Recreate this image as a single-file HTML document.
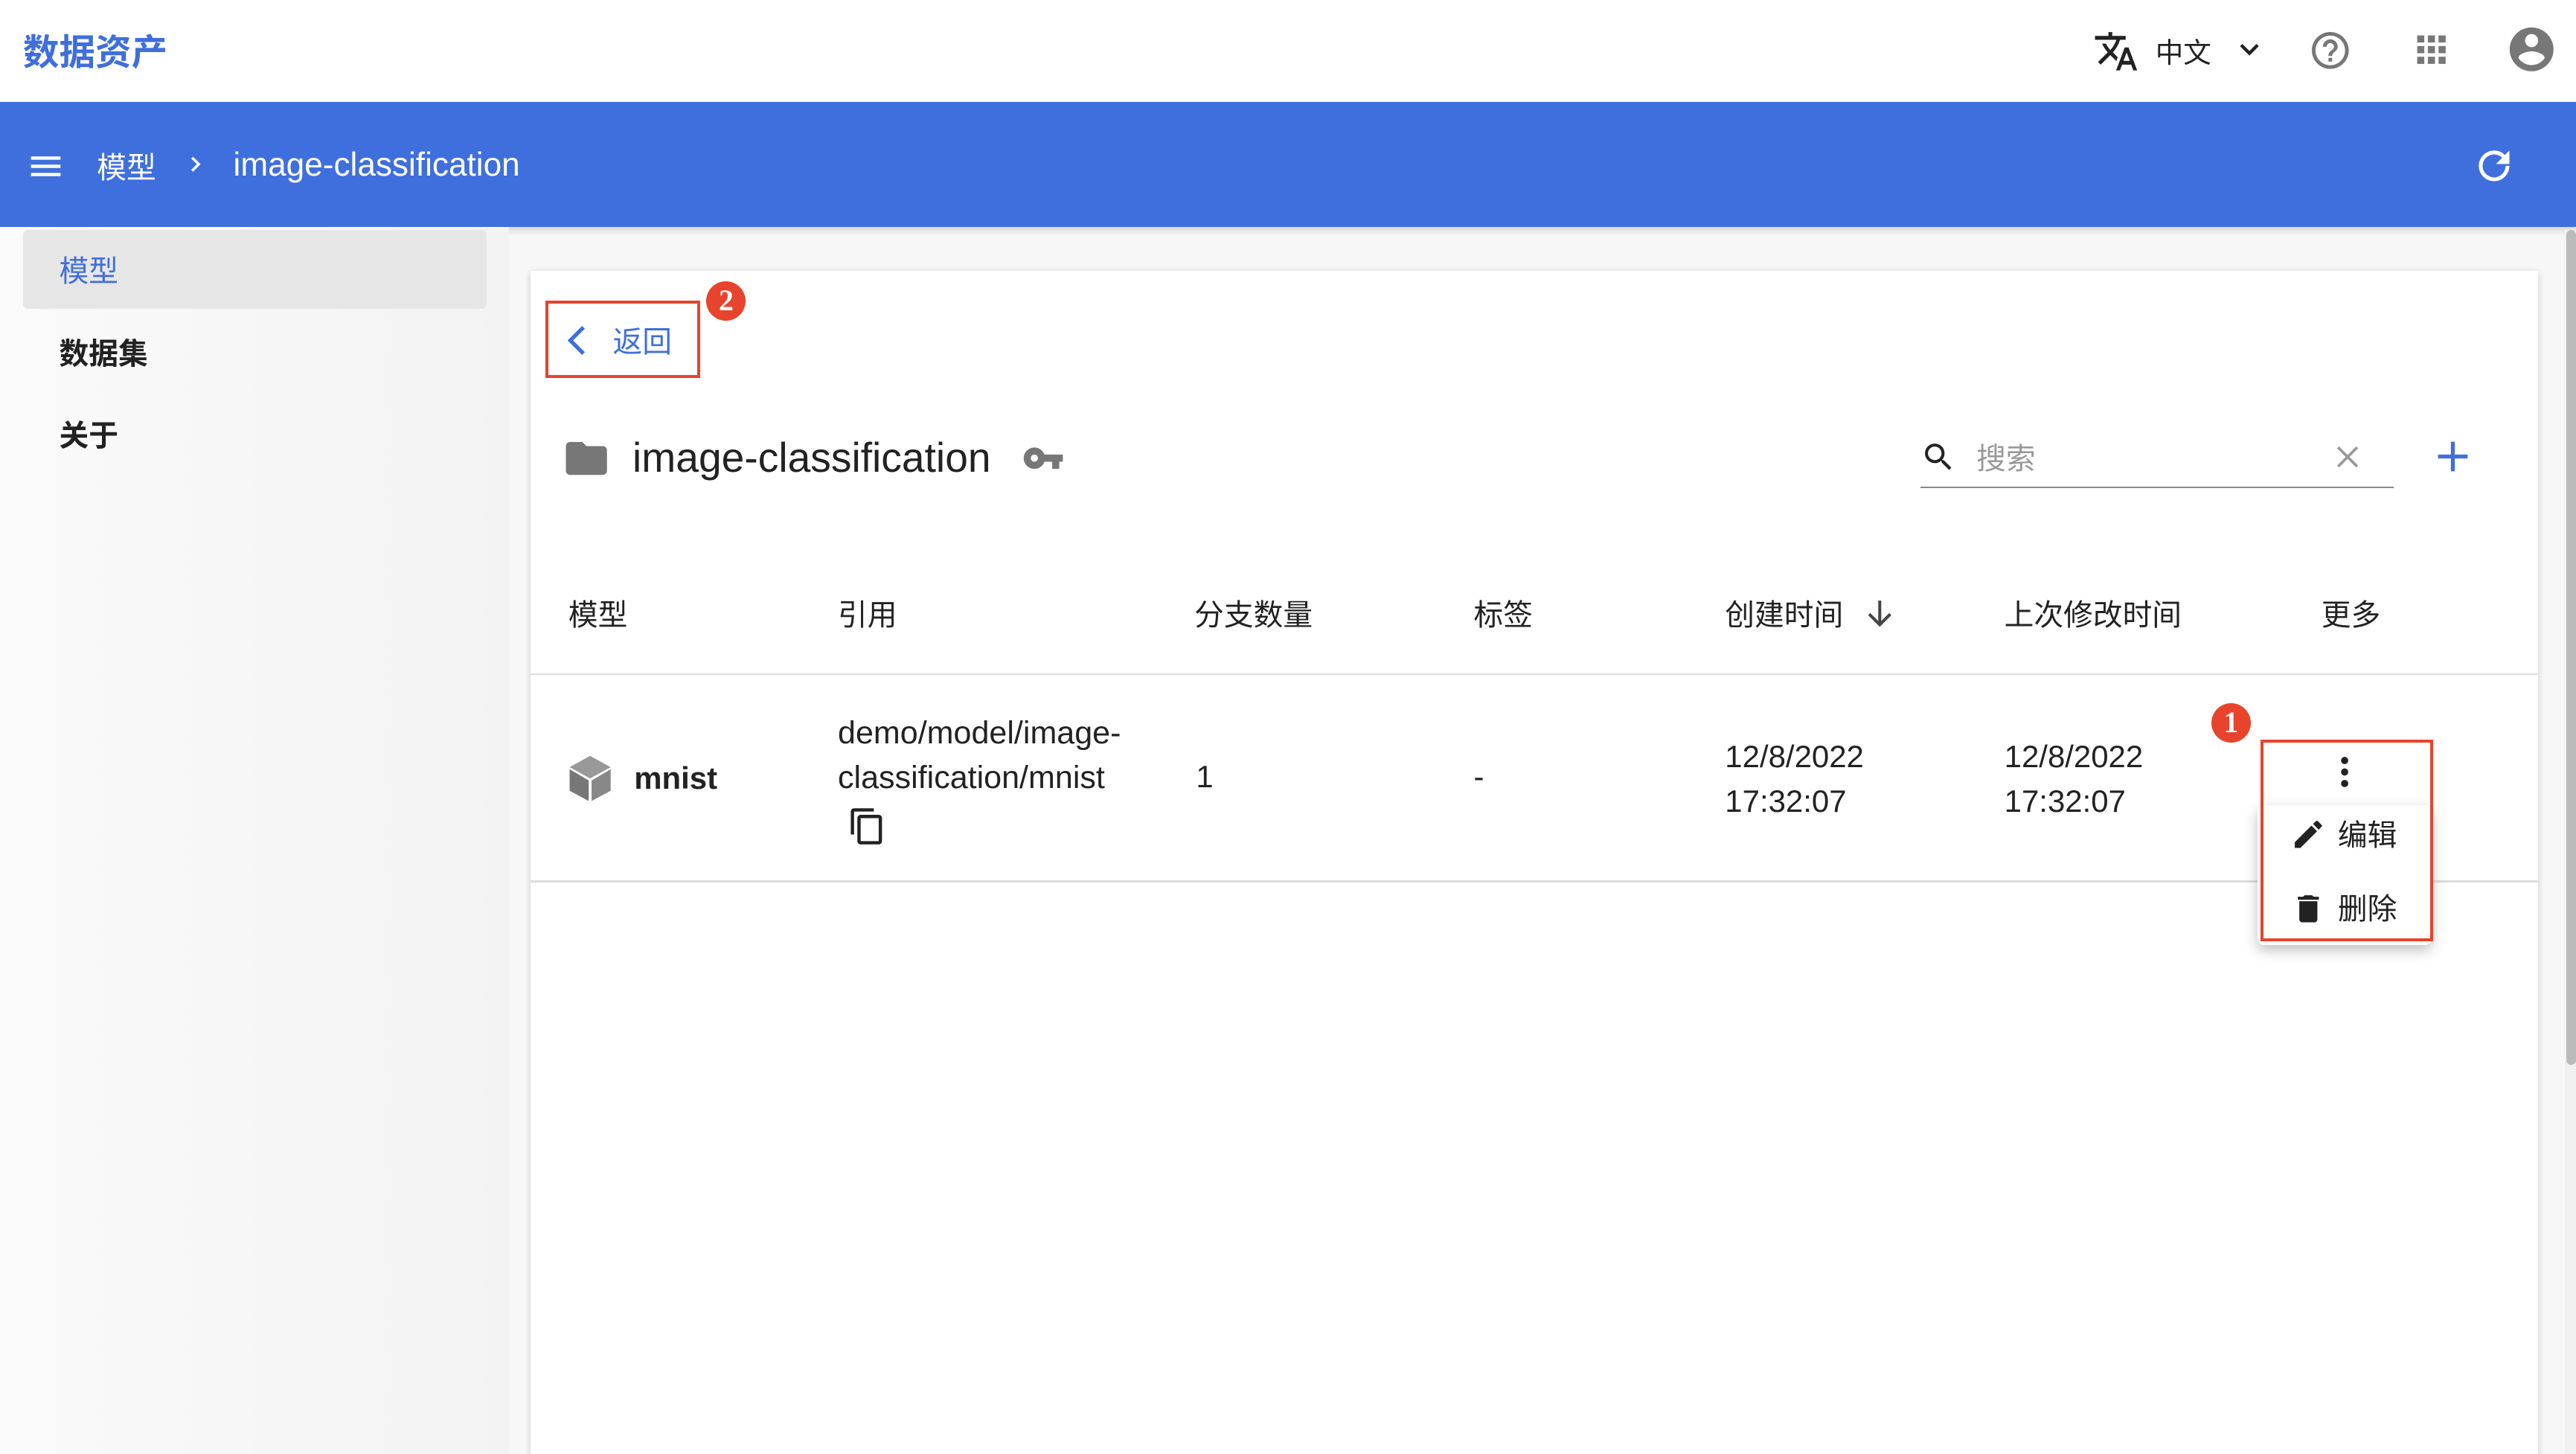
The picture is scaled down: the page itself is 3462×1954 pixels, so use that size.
<!DOCTYPE html>
<html><head><meta charset="utf-8"><style>
*{margin:0;padding:0;box-sizing:border-box}
html,body{width:3462px;height:1954px;overflow:hidden;background:#fff}
#r{zoom:2.20791;width:1568px;height:885px;position:relative;font-family:"Liberation Sans","Noto Sans CJK SC",sans-serif;color:#222;background:#f7f7f7}
.a{position:absolute;white-space:nowrap}
</style></head><body><div id="r">
<div class="a" style="left:0;top:0;width:1568px;height:62px;background:#fff"></div>
<div class="a" style="left:14px;top:14px;font-size:22px;color:#3f6fdc;font-weight:bold">数据资产</div>
<svg class="a" style="left:1274px;top:17px" width="28" height="28" viewBox="0 0 24 24"><path fill="#222" d="M12.87 15.07l-2.54-2.51.03-.03A17.5 17.5 0 0014.07 6H17V4h-7V2H8v2H1v2h11.17C11.5 7.92 10.44 9.75 9 11.35 8.07 10.32 7.3 9.19 6.69 8h-2c.73 1.63 1.73 3.17 2.98 4.56l-5.09 5.02L4 19l5-5 3.11 3.11.76-2.04zM18.5 10h-2L12 22h2l1.12-3h4.75L21 22h2l-4.5-12zm-2.62 7l1.62-4.33L19.12 17h-3.24z"/></svg>
<div class="a" style="left:1312px;top:18px;font-size:17px">中文</div>
<svg class="a" style="left:1359px;top:20px" width="20" height="20" viewBox="0 0 24 24"><path fill="none" stroke="#222" stroke-width="2.4" d="M6 9l6 6 6-6"/></svg>
<svg class="a" style="left:1405px;top:17px" width="27" height="27" viewBox="0 0 24 24"><path fill="#777" d="M11 18h2v-2h-2v2zm1-16C6.48 2 2 6.48 2 12s4.48 10 10 10 10-4.480 10-10S17.52 2 12 2zm0 18c-4.41 0-8-3.59-8-8s3.59-8 8-8 8 3.59 8 8-3.59 8-8 8zm0-14c-2.21 0-4 1.79-4 4h2c0-1.1.9-2 2-2s2 .9 2 2c0 2-3 1.750-3 5h2c0-2.25 3-2.5 3-5 0-2.21-1.79-4-4-4z"/></svg>
<svg class="a" style="left:1467px;top:17px" width="26" height="26" viewBox="0 0 24 24"><path fill="#777" d="M4 8h4V4H4v4zm6 12h4v-4h-4v4zm-6 0h4v-4H4v4zm0-6h4v-4H4v4zm6 0h4v-4h-4v4zm6-10v4h4V4h-4zm-6 4h4V4h-4v4zm6 6h4v-4h-4v4zm0 6h4v-4h-4v4z"/></svg>
<svg class="a" style="left:1525px;top:14px" width="32" height="32" viewBox="0 0 24 24"><path fill="#777" d="M12 2C6.48 2 2 6.48 2 12s4.48 10 10 10 10-4.48 10-10S17.52 2 12 2zm0 3c1.66 0 3 1.34 3 3s-1.34 3-3 3-3-1.34-3-3 1.34-3 3-3zm0 14.2c-2.5 0-4.71-1.28-6-3.22.03-1.99 4-3.08 6-3.08 1.99 0 5.970 1.09 6 3.08-1.29 1.94-3.5 3.22-6 3.22z"/></svg>
<div class="a" style="left:0;top:62px;width:1568px;height:76px;background:#3f6fdd;box-shadow:0 2px 4px rgba(0,0,0,.15)"></div>
<svg class="a" style="left:16px;top:89px" width="24" height="24" viewBox="0 0 24 24"><path fill="#fff" d="M3 18h18v-2H3v2zm0-5h18v-2H3v2zm0-7v2h18V6H3z"/></svg>
<div class="a" style="left:59px;top:88px;font-size:18px;color:#fff">模型</div>
<svg class="a" style="left:111px;top:92px" width="16" height="16" viewBox="0 0 24 24"><path fill="none" stroke="#fff" stroke-width="2.4" d="M9 6l6 6-6 6"/></svg>
<div class="a" style="left:142px;top:89px;font-size:20px;color:#fff">image-classification</div>
<svg class="a" style="left:1504px;top:87px" width="28" height="28" viewBox="0 0 24 24"><path fill="#fff" d="M17.65 6.35A7.96 7.96 0 0012 4a8 8 0 108 8h-2a6 6 0 11-1.76-4.24L13 11h7V4l-2.35 2.35z"/></svg>
<div class="a" style="left:0;top:138px;width:310px;height:747px;background:linear-gradient(90deg,#fafafa,#f3f3f3)"></div>
<div class="a" style="left:14px;top:140px;width:282px;height:48px;background:#e6e6e6;border-radius:3px"></div>
<div class="a" style="left:36px;top:151px;font-size:18px;color:#3f6fdc">模型</div>
<div class="a" style="left:36px;top:201px;font-size:18px;font-weight:bold">数据集</div>
<div class="a" style="left:36px;top:251px;font-size:18px;font-weight:bold">关于</div>
<div class="a" style="left:323px;top:165px;width:1222px;height:730px;background:#fff;box-shadow:0 1px 4px rgba(0,0,0,.18)"></div>
<div class="a" style="left:332px;top:183px;width:94px;height:47px;border:2px solid #e8432c"></div>
<svg class="a" style="left:340px;top:195px" width="24" height="24" viewBox="0 0 24 24"><path fill="none" stroke="#3f6fdc" stroke-width="2.4" d="M15 4l-8 8 8 8"/></svg>
<div class="a" style="left:373px;top:194px;font-size:18px;color:#3f6fdc">返回</div>
<div class="a" style="left:430px;top:171px;width:24px;height:24px;border-radius:50%;background:#e8432c;color:#fff;font:bold 18px/24px 'Liberation Serif',serif;text-align:center">2</div>
<svg class="a" style="left:342px;top:264px" width="30" height="30" viewBox="0 0 24 24"><path fill="#777" d="M10 4H4c-1.1 0-2 .9-2 2v12c0 1.1.9 2 2 2h16c1.1 0 2-.9 2-2V8c0-1.1-.9-2-2-2h-8l-2-2z"/></svg>
<div class="a" style="left:385px;top:264px;font-size:25px">image-classification</div>
<svg class="a" style="left:620px;top:266px" width="30" height="26" viewBox="0 0 24 24"><path fill="#777" d="M12.65 10A5.99 5.99 0 007 6c-3.31 0-6 2.69-6 6s2.69 6 6 6a5.99 5.99 0 005.65-4H17v4h4v-4h2v-4H12.65zM7 14c-1.1 0-2-.9-2-2s.9-2 2-2 2 .9 2 2-.9 2-2 2z"/></svg>
<svg class="a" style="left:1169px;top:267px" width="22" height="22" viewBox="0 0 24 24"><path fill="#222" d="M15.5 14h-.79l-.28-.27A6.47 6.47 0 0016 9.5 6.5 6.5 0 109.5 16c1.61 0 3.09-.59 4.23-1.57l.27.28v.79l5 4.99L20.49 19l-4.99-5zm-6 0C7.01 14 5 11.99 5 9.5S7.01 5 9.5 5 14 7.01 14 9.5 11.99 14 9.5 14z"/></svg>
<div class="a" style="left:1203px;top:265px;font-size:18px;color:#999">搜索</div>
<svg class="a" style="left:1419px;top:268px" width="20" height="20" viewBox="0 0 24 24"><path fill="none" stroke="#999" stroke-width="2" d="M5 5l14 14M19 5L5 19"/></svg>
<div class="a" style="left:1169px;top:296px;width:288px;height:1px;background:#888"></div>
<svg class="a" style="left:1481px;top:266px" width="24" height="24" viewBox="0 0 24 24"><path fill="none" stroke="#3f6fdc" stroke-width="2.4" d="M12 3v18M3 12h18"/></svg>
<div class="a" style="top:360px;left:0;font-size:18px;width:1568px;height:24px">
<span class="a" style="left:346px">模型</span><span class="a" style="left:510px">引用</span><span class="a" style="left:727px">分支数量</span><span class="a" style="left:897px">标签</span><span class="a" style="left:1050px">创建时间</span><span class="a" style="left:1220px">上次修改时间</span><span class="a" style="left:1413px">更多</span></div>
<svg class="a" style="left:1133px;top:362px" width="22" height="22" viewBox="0 0 24 24"><path fill="none" stroke="#444" stroke-width="2" d="M12 4v16M5 13l7 7 7-7"/></svg>
<div class="a" style="left:323px;top:410px;width:1222px;height:1px;background:#ddd"></div>
<div class="a" style="left:323px;top:536px;width:1222px;height:1px;background:#ddd"></div>
<svg class="a" style="left:344px;top:459px" width="30" height="30" viewBox="0 0 24 24"><path fill="#999" d="M12 1L2 6.5 12 12l10-5.5z"/><path fill="#777" d="M2 7.5v10.5l9.3 5V13z"/><path fill="#888" d="M22 7.5v10.5l-9.3 5V13z"/></svg>
<div class="a" style="left:386px;top:463px;font-size:19px;font-weight:bold">mnist</div>
<div class="a" style="left:510px;top:433px;font-size:19.5px;line-height:27px">demo/model/image-<br>classification/mnist</div>
<svg class="a" style="left:516px;top:491px" width="24" height="24" viewBox="0 0 24 24"><path fill="#222" d="M16 1H4c-1.1 0-2 .9-2 2v14h2V3h12V1zm3 4H8c-1.1 0-2 .9-2 2v14c0 1.1.9 2 2 2h11c1.1 0 2-.9 2-2V7c0-1.1-.9-2-2-2zm0 16H8V7h11v14z"/></svg>
<div class="a" style="left:728px;top:462px;font-size:19px">1</div>
<div class="a" style="left:897px;top:462px;font-size:19px">-</div>
<div class="a" style="left:1050px;top:447px;font-size:19px;line-height:27px">12/8/2022<br>17:32:07</div>
<div class="a" style="left:1220px;top:447px;font-size:19px;line-height:27px">12/8/2022<br>17:32:07</div>
<div class="a" style="left:1374px;top:490px;width:106px;height:85px;background:#fff;border-radius:4px;box-shadow:0 3px 8px rgba(0,0,0,.25)"></div>
<div class="a" style="left:1376px;top:450px;width:105px;height:123px;border:2px solid #e8432c"></div>
<svg class="a" style="left:1417px;top:458px" width="20" height="24" viewBox="0 0 20 24"><circle cx="10" cy="5" r="2.2" fill="#222"/><circle cx="10" cy="12" r="2.2" fill="#222"/><circle cx="10" cy="19" r="2.2" fill="#222"/></svg>
<svg class="a" style="left:1394px;top:497px" width="22" height="22" viewBox="0 0 24 24"><path fill="#222" d="M3 17.25V21h3.75L17.81 9.94l-3.75-3.75L3 17.25zM20.71 7.04a1 1 0 000-1.41l-2.34-2.34a1 1 0 00-1.41 0l-1.83 1.83 3.75 3.75 1.83-1.830z"/></svg>
<div class="a" style="left:1423px;top:494px;font-size:18px">编辑</div>
<svg class="a" style="left:1394px;top:542px" width="22" height="22" viewBox="0 0 24 24"><path fill="#222" d="M6 19c0 1.1.9 2 2 2h8c1.1 0 2-.9 2-2V7H6v12zM19 4h-3.5l-1-1h-5l-1 1H5v2h14V4z"/></svg>
<div class="a" style="left:1423px;top:539px;font-size:18px">删除</div>
<div class="a" style="left:1346px;top:428px;width:24px;height:24px;border-radius:50%;background:#e8432c;color:#fff;font:bold 18px/24px 'Liberation Serif',serif;text-align:center">1</div>
<div class="a" style="left:1561px;top:140px;width:7px;height:745px;background:#f0f0f0"></div>
<div class="a" style="left:1562px;top:140px;width:6px;height:508px;background:#bbb;border-radius:3px"></div>
</div></body></html>
